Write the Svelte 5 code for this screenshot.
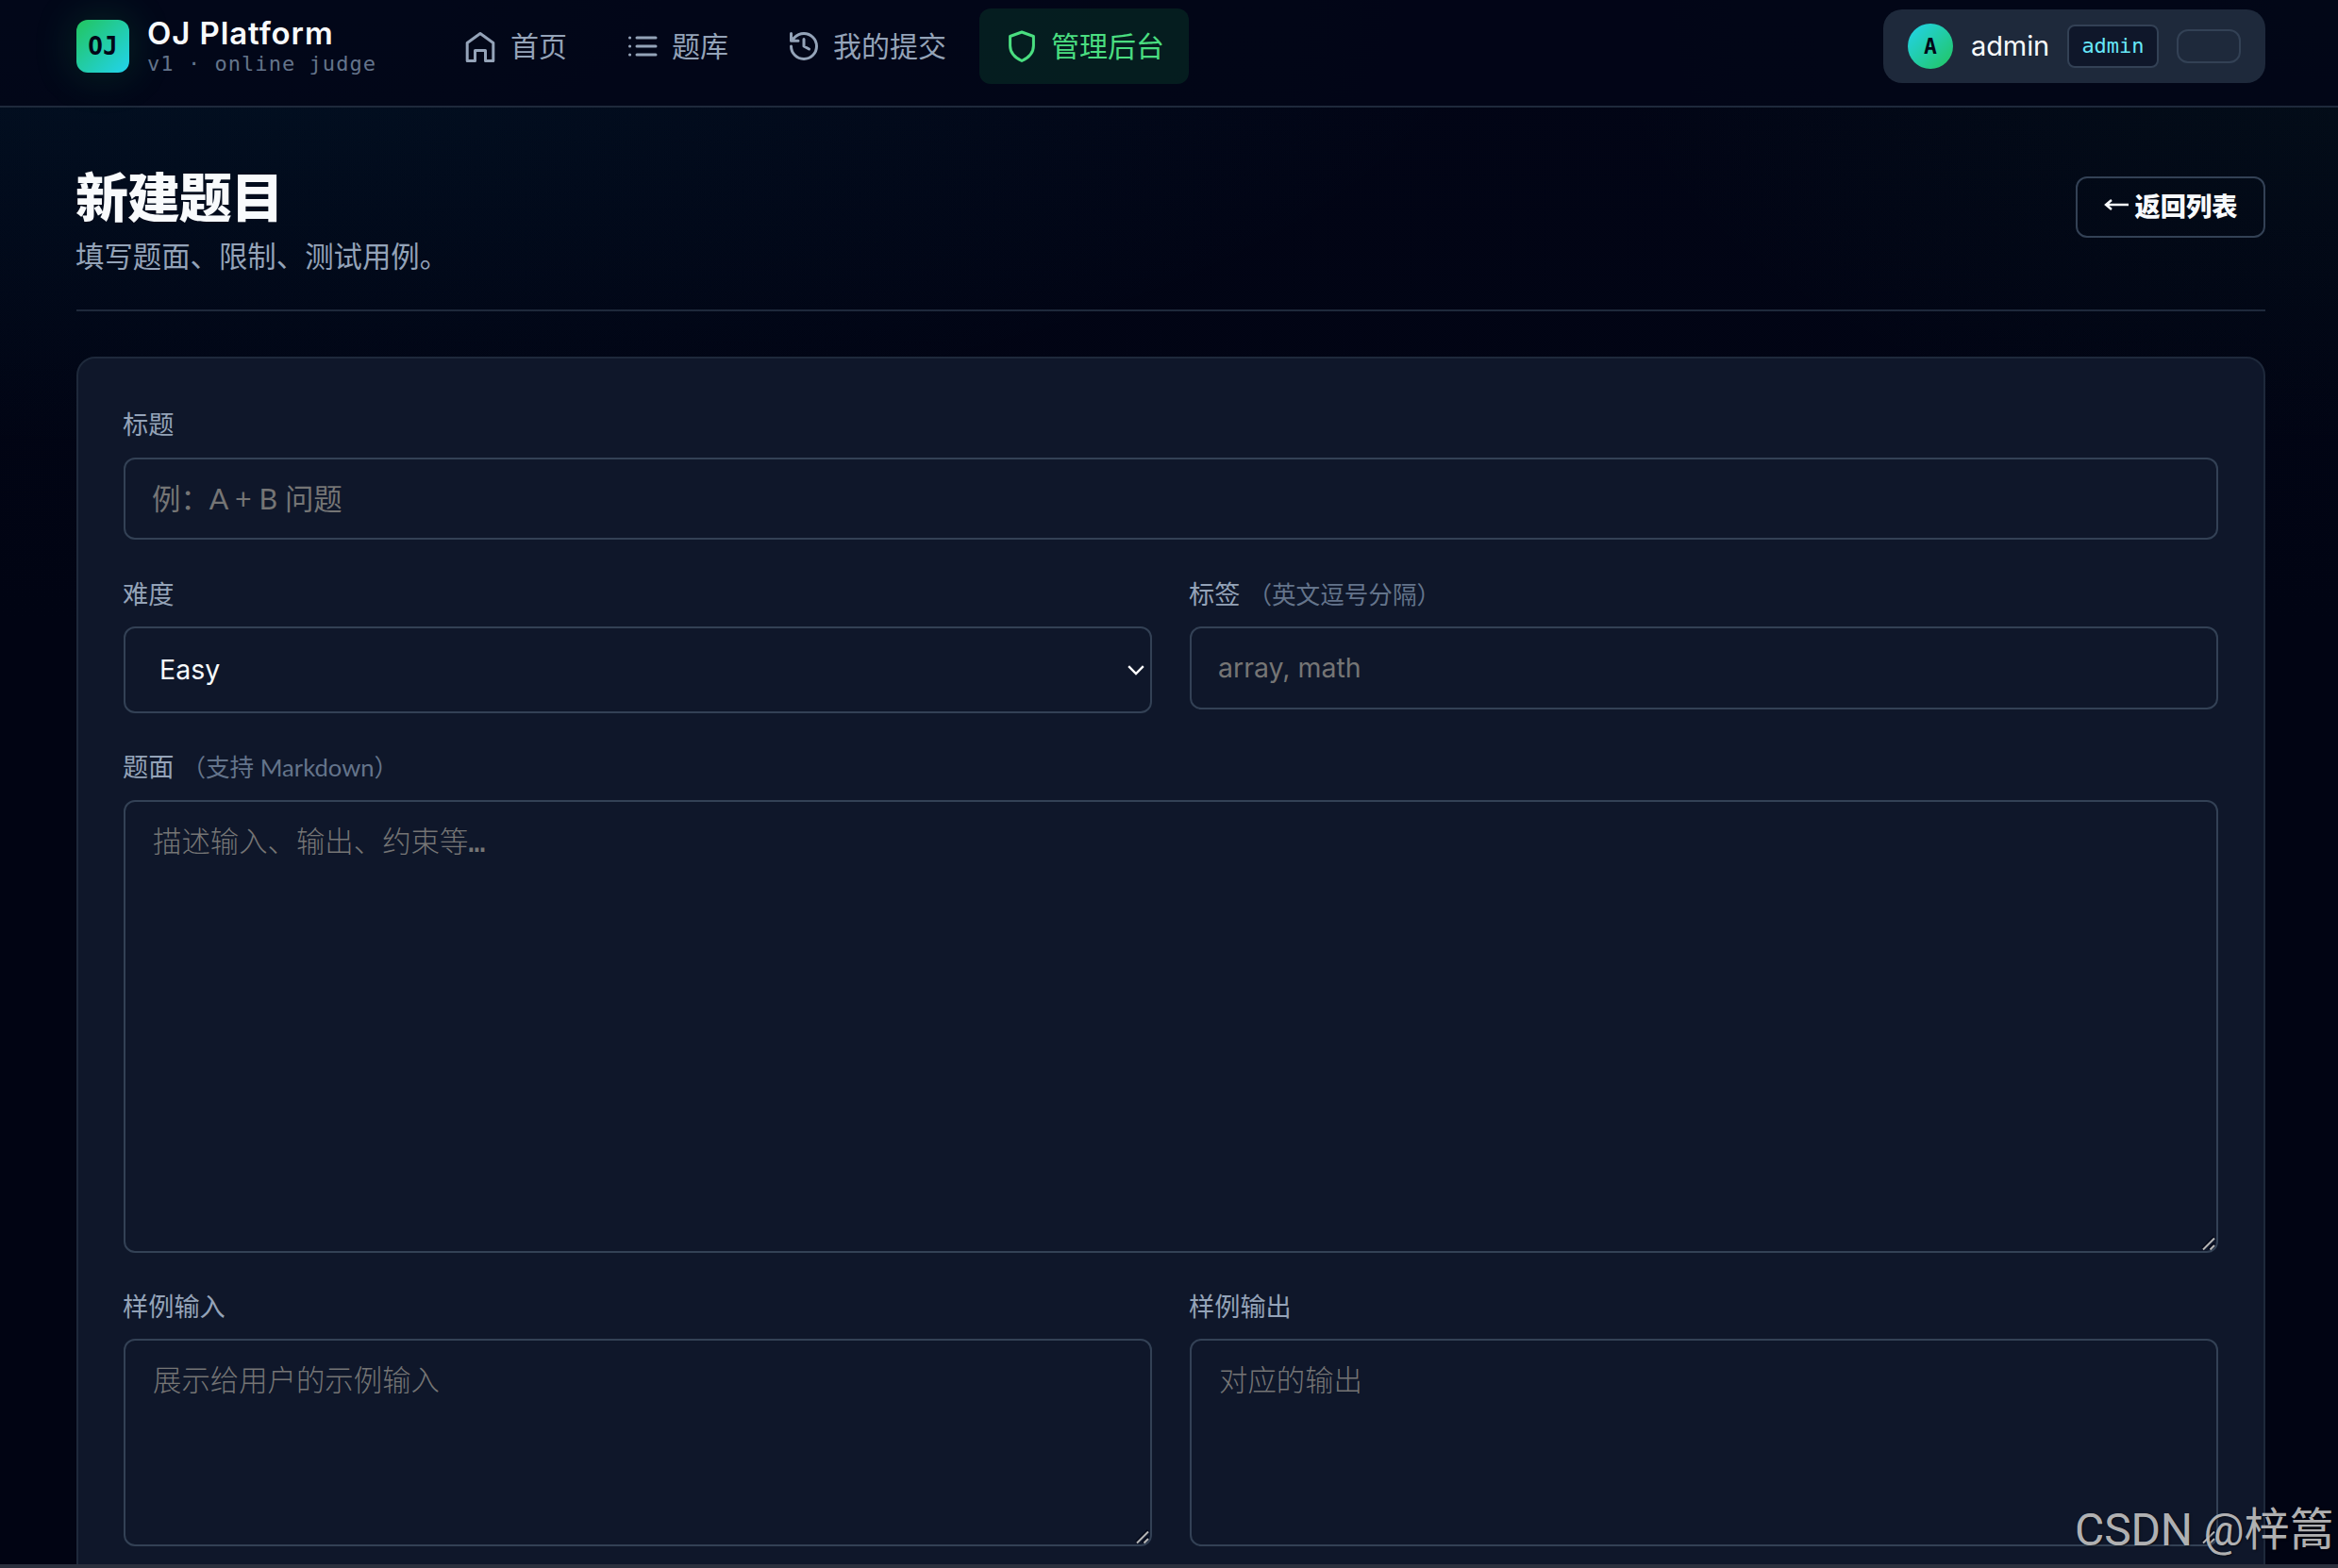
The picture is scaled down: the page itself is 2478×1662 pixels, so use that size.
<script>
    let difficulty = "Easy";
    let title = "";
    let tags = "";
    let statement = "";
    let sampleInput = "";
    let sampleOutput = "";

    const navItems = [
        { key: "home", label: "首页" },
        { key: "problems", label: "题库" },
        { key: "submissions", label: "我的提交" },
        { key: "admin", label: "管理后台" },
    ];
    let active = "admin";
</script>

{#snippet grip()}
    <svg class="grip" viewBox="0 0 16 16" aria-hidden="true">
        <path class="shade" d="M1 13.5L13.5 1M8 14L14 8" />
        <path d="M2 14.5L14 2.5M9.5 14.5L14 10" />
    </svg>
{/snippet}

<div class="page" lang="zh-CN">
    <header class="topbar">
        <div class="brand">
            <span class="logo">OJ</span>
            <div class="brand-text">
                <span class="brand-name">OJ Platform</span>
                <span class="brand-sub">v1 · online judge</span>
            </div>
        </div>

        <nav>
            {#each navItems as item}
                <button class="nav-item" class:active={item.key === active} on:click={() => (active = item.key)}>
                    <svg viewBox="0 0 36 36" aria-hidden="true">
                        {#if item.key === "home"}
                            <path d="M4.2 14.5L18 4.5L31.8 14.5V33.5H23.5V22.5H12.5V33.5H4.2Z" />
                        {:else if item.key === "problems"}
                            <path d="M13 9H33M13 18H33M13 27H33M5.5 9h.1M5.5 18h.1M5.5 27h.1" />
                        {:else if item.key === "submissions"}
                            <path d="M5.5 18A13.5 13.5 0 1 0 19 4.5C14.8 4.5 11.5 6.2 9 8.8L5.5 12.2M5.5 4.5V12.2H13M19 10.5V18L24.5 21" />
                        {:else}
                            <path d="M19 3L31.4 7.5V17.5C31.4 24.5 26.5 30 19 33.5C11.5 30 6.6 24.5 6.6 17.5V7.5Z" />
                        {/if}
                    </svg>
                    <span>{item.label}</span>
                </button>
            {/each}
        </nav>

        <div class="user">
            <span class="avatar">A</span>
            <span class="user-name">admin</span>
            <span class="role">admin</span>
            <button class="logout" aria-label="logout"></button>
        </div>
    </header>

    <main>
        <div class="page-head">
            <div>
                <h1>新建题目</h1>
                <p>填写题面、限制、测试用例。</p>
            </div>
            <button class="back">
                <svg class="arrow" viewBox="0 0 27 18" aria-hidden="true">
                    <path d="M26 9H2M8 4L2 9L8 14" />
                </svg>
                <span>返回列表</span>
            </button>
        </div>

        <form class="card">
            <div class="field">
                <label for="title">标题</label>
                <input id="title" class="title-input" placeholder="例：A + B 问题" bind:value={title} />
            </div>

            <div class="row">
                <div class="field">
                    <label for="difficulty">难度</label>
                    <div class="select-wrap">
                        <select id="difficulty" bind:value={difficulty}>
                            <option>Easy</option>
                            <option>Medium</option>
                            <option>Hard</option>
                        </select>
                        <svg class="chevron" viewBox="0 0 18 11" aria-hidden="true">
                            <path d="M1.2 1.2L9 9L16.8 1.2" />
                        </svg>
                    </div>
                </div>
                <div class="field">
                    <label for="tags">标签<span class="hint">（英文逗号分隔）</span></label>
                    <input id="tags" class="latin" placeholder="array, math" bind:value={tags} />
                </div>
            </div>

            <div class="field">
                <label for="statement">题面<span class="hint">（支持 Markdown）</span></label>
                <div class="area">
                    <textarea id="statement" class="tall" placeholder="描述输入、输出、约束等…" bind:value={statement}></textarea>
                    {@render grip()}
                </div>
            </div>

            <div class="row samples">
                <div class="field">
                    <label for="sample-in">样例输入</label>
                    <div class="area">
                        <textarea id="sample-in" placeholder="展示给用户的示例输入" bind:value={sampleInput}></textarea>
                        {@render grip()}
                    </div>
                </div>
                <div class="field">
                    <label for="sample-out">样例输出</label>
                    <div class="area">
                        <textarea id="sample-out" placeholder="对应的输出" bind:value={sampleOutput}></textarea>
                        {@render grip()}
                    </div>
                </div>
            </div>
        </form>
    </main>

    <div class="bottom-edge"></div>
    <div class="watermark">CSDN @梓篙</div>
</div>

<style>
    :global(body) {
        background: #020617;
        overflow: hidden;
    }

    .page {
        --sans: Lato, "Noto Sans CJK SC", sans-serif;
        --latin: Inter, "Noto Sans CJK SC", sans-serif;
        --mono: "DejaVu Sans Mono", "Noto Sans CJK SC", monospace;
        --line: #1e293b;
        --border: #334155;
        --muted: #94a3b8;
        position: relative;
        box-sizing: border-box;
        height: 1662px;
        overflow: hidden;
        font-family: var(--sans);
        color: #f8fafc;
        background:
            radial-gradient(ellipse 1400px 480px at 8% 0%, rgba(6, 182, 212, 0.07), transparent 100%),
            radial-gradient(ellipse 800px 480px at 100% 0%, rgba(34, 197, 94, 0.05), transparent 100%),
            linear-gradient(180deg, #020516 0%, #010413 40%, #010413 100%);
    }

    button,
    input,
    select,
    textarea {
        font-family: inherit;
        box-sizing: border-box;
        margin: 0;
    }

    .topbar {
        box-sizing: border-box;
        height: 114px;
        padding: 0 77px 14px 81px;
        display: flex;
        align-items: center;
        border-bottom: 2px solid var(--line);
        background: rgba(2, 6, 23, 0.85);
    }

    .brand {
        display: flex;
        align-items: center;
        gap: 19px;
        width: 384px;
    }

    .logo {
        width: 56px;
        height: 56px;
        border-radius: 12px;
        display: flex;
        align-items: center;
        justify-content: center;
        background: linear-gradient(135deg, #22c55e, #22d3ee);
        box-shadow: 0 0 48px rgba(34, 197, 94, 0.2);
        color: #020617;
        font: 700 26px var(--mono);
    }

    .brand-text {
        display: flex;
        flex-direction: column;
    }

    .brand-name {
        font: 600 33px/36px Inter, sans-serif;
        letter-spacing: 0.9px;
        white-space: nowrap;
    }

    .brand-sub {
        padding-top: 1px;
        font: 22px/28px var(--mono);
        letter-spacing: 1.05px;
        color: #64748b;
        white-space: nowrap;
    }

    nav {
        display: flex;
        gap: 9px;
    }

    .nav-item {
        height: 80px;
        padding: 0 26px;
        border: 0;
        border-radius: 12px;
        display: flex;
        align-items: center;
        gap: 14px;
        background: none;
        color: var(--muted);
        font-size: 30px;
        white-space: nowrap;
    }

    .nav-item span,
    .back span {
        padding-bottom: 5px;
    }

    .nav-item svg {
        width: 36px;
        height: 36px;
        fill: none;
        stroke: currentColor;
        stroke-width: 3;
        stroke-linecap: round;
        stroke-linejoin: round;
    }

    .active {
        background: rgba(34, 197, 94, 0.12);
        color: #4ade80;
    }

    .user {
        box-sizing: border-box;
        height: 78px;
        margin-left: auto;
        padding: 0 26px;
        border-radius: 20px;
        display: flex;
        align-items: center;
        gap: 19px;
        background: #1e293b;
    }

    .avatar {
        width: 48px;
        height: 48px;
        border-radius: 50%;
        display: flex;
        align-items: center;
        justify-content: center;
        background: linear-gradient(135deg, #22d3ee, #22c55e);
        color: #020617;
        font: 700 23px var(--mono);
    }

    .user-name {
        width: 83px;
        font-family: var(--latin);
        font-size: 29px;
        letter-spacing: -0.1px;
        padding-bottom: 1px;
    }

    .role {
        box-sizing: border-box;
        width: 97px;
        height: 46px;
        border: 2px solid var(--border);
        border-radius: 8px;
        background: #0f172a;
        color: #67e8f9;
        font: 22px/41px var(--mono);
        text-align: center;
    }

    .logout {
        width: 68px;
        height: 36px;
        border: 2px solid var(--border);
        border-radius: 12px;
        background: none;
    }

    main {
        padding: 61px 77px 0 81px;
    }

    .page-head {
        display: flex;
        justify-content: space-between;
        align-items: flex-start;
        height: 153px;
        border-bottom: 2px solid var(--line);
        margin-bottom: 48px;
    }

    h1 {
        margin: 0;
        font-size: 56px;
        line-height: 67px;
        font-weight: 900;
        letter-spacing: -1.12px;
        text-indent: -1px;
    }

    p {
        margin: 5px 0 0;
        font-size: 30.4px;
        line-height: 49px;
        color: var(--muted);
        text-indent: -1px;
    }

    .back {
        width: 201px;
        height: 65px;
        margin-top: 12px;
        padding: 0;
        border: 2px solid var(--border);
        border-radius: 12px;
        display: flex;
        align-items: center;
        justify-content: center;
        gap: 6px;
        background: none;
        color: #f8fafc;
        font-size: 27.2px;
        font-weight: 800;
    }

    .arrow {
        width: 27px;
        height: 18px;
        margin-bottom: 5px;
        fill: none;
        stroke: currentColor;
        stroke-width: 2.4;
    }

    .card {
        box-sizing: border-box;
        height: 1400px;
        padding: 48px;
        border: 2px solid var(--line);
        border-radius: 20px;
        display: flex;
        flex-direction: column;
        gap: 35px;
        background: #0f172a;
    }

    .row {
        display: grid;
        grid-template-columns: 1fr 1fr;
        gap: 40px;
        align-items: start;
    }

    .row label {
        line-height: 45px;
    }

    .samples {
        margin-top: -1px;
    }

    .field {
        display: flex;
        flex-direction: column;
        gap: 14px;
    }

    label {
        height: 43px;
        font-size: 27.2px;
        line-height: 43px;
        color: var(--muted);
        text-indent: -1px;
        white-space: nowrap;
    }

    .hint {
        margin-left: 8px;
        font-size: 25.6px;
        color: #64748b;
    }

    input,
    select,
    textarea {
        display: block;
        width: 100%;
        border: 2px solid var(--border);
        border-radius: 12px;
        outline: none;
        background: transparent;
        color: #f8fafc;
        font-size: 30.4px;
    }

    input {
        height: 88px;
        padding: 0 28px 2px;
    }

    .title-input {
        height: 87px;
    }

    select {
        height: 92px;
        padding: 0 36px 2px;
        appearance: none;
    }

    select,
    .latin {
        font-family: var(--latin);
        font-size: 28.5px;
    }

    .select-wrap,
    .area {
        position: relative;
    }

    .chevron {
        position: absolute;
        right: 8px;
        top: 41px;
        width: 18px;
        height: 11px;
        fill: none;
        stroke: #fff;
        stroke-width: 2.4;
    }

    textarea {
        height: 220px;
        padding: 18px 29px;
        font-family: var(--mono);
        font-weight: 300;
        line-height: 49px;
        resize: none;
    }

    .tall {
        height: 480px;
    }

    ::placeholder {
        color: #757575;
        opacity: 1;
    }

    .grip {
        position: absolute;
        right: 2px;
        bottom: 2px;
        width: 16px;
        height: 16px;
        fill: none;
        stroke: #b5b5b5;
        stroke-width: 2;
    }

    .grip .shade {
        stroke: #020617;
    }

    .bottom-edge {
        position: absolute;
        left: 0;
        right: 0;
        bottom: 0;
        height: 4px;
        background: #2b303e;
    }

    .watermark {
        position: absolute;
        right: 4px;
        bottom: 4px;
        font: 48px/72px Roboto, "Noto Sans CJK SC", sans-serif;
        letter-spacing: -0.2px;
        color: rgba(200, 200, 200, 0.9);
        text-shadow: 1px 1px 2px rgba(0, 0, 0, 0.5);
    }
</style>
